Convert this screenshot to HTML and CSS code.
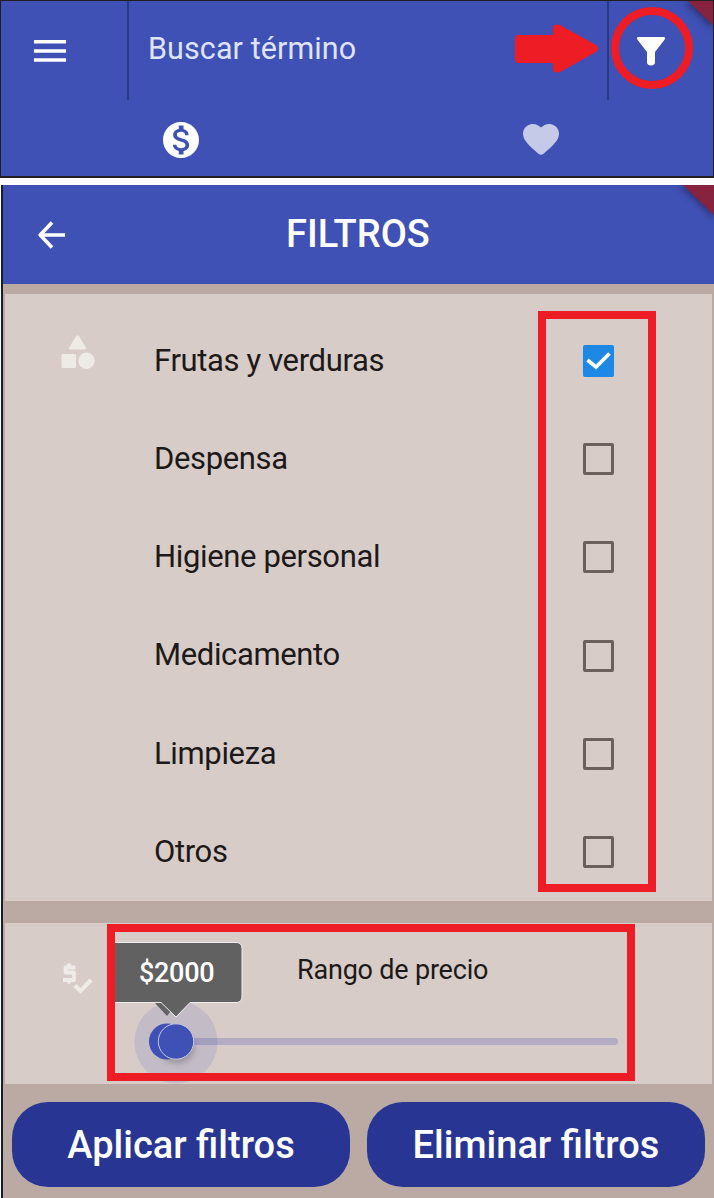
FILE: index.html
```html
<!DOCTYPE html>
<html lang="es">
<head>
<meta charset="utf-8">
<title>Filtros</title>
<link rel="stylesheet" href="styles.css">
</head>
<body>
<section class="search-panel">
  <div class="search-bar">
    <div class="menu"><svg width="32" height="22" viewBox="0 0 32 22"><path d="M0 1.8h32M0 11h32M0 20h32" stroke="#fff" stroke-width="3.6"/></svg></div>
    <div class="search-field"><span class="search-text">Buscar término</span></div>
    <div class="filter"><svg width="28" height="29" viewBox="0 0 28 29"><path fill="#fff" d="M1.5 0h25c1.5 0 2 1.400 1 2.700L18 15v10.500c0 4-8 4-8 0V15L.5 2.700C-.5 1.400 0 0 1.500 0z"/></svg></div>
  </div>
  <div class="tabs">
    <div class="tab"><svg width="36" height="36" viewBox="2 2 20 20"><path fill="#fff" d="M12 2C6.480 2 2 6.480 2 12s4.480 10 10 10 10-4.480 10-10S17.520 2 12 2zm1.410 16.090V20h-2.670v-1.930c-1.710-.36-3.160-1.460-3.270-3.400h1.960c.1 1.050.82 1.870 2.650 1.870 1.960 0 2.400-.98 2.400-1.590 0-.83-.44-1.610-2.670-2.140-2.480-.6-4.180-1.620-4.180-3.670 0-1.720 1.390-2.840 3.110-3.210V4h2.670v1.950c1.860.45 2.790 1.860 2.850 3.390H14.300c-.05-1.110-.64-1.870-2.220-1.870-1.500 0-2.400.68-2.400 1.640 0 .84.65 1.390 2.670 1.910s4.180 1.390 4.180 3.910c-.01 1.830-1.380 2.830-3.120 3.160z"/></svg></div>
    <div class="tab"><svg width="36" height="32" viewBox="2 3 20 18.350" preserveAspectRatio="none"><path fill="#c5cae9" d="M13.350 20.700c-.76.69-1.930.69-2.690-.01l-.11-.1C5.300 15.830 1.870 12.720 2 8.840c.06-1.700.93-3.330 2.340-4.290 2.640-1.800 5.900-.96 7.660 1.100 1.760-2.060 5.020-2.910 7.660-1.100 1.410.96 2.280 2.590 2.340 4.290.14 3.880-3.300 6.990-8.550 11.760l-.1.100z"/></svg></div>
  </div>
  <svg class="ribbon" width="50" height="50" viewBox="0 0 50 50"><path class="ribbon-shade" d="M20 0L50 29V0z"/><path fill="#87233f" d="M25 0L50 24V0z"/></svg>
  <svg class="pointer" width="86" height="50" viewBox="0 0 86 50"><path fill="#ee1c24" d="M4 11H39V4Q39-1 46 1L82 21Q87 24.500 82 28L46 48Q39 50 39 45V39H4Q1 39 1 34V16Q1 11 4 11z"/></svg>
  <div class="ring"></div>
</section>

<section class="filters">
  <header class="app-bar">
    <svg class="back" width="28" height="30" viewBox="0 0 28 30"><path d="M27 15H3M14 2.500L2.200 15 14 27.500" fill="none" stroke="#fff" stroke-width="3.600" stroke-linejoin="round"/></svg>
    <h1 class="title">FILTROS</h1>
    <svg class="ribbon" width="50" height="50" viewBox="0 0 50 50"><path class="ribbon-shade" d="M14 0L50 34V0z"/><path fill="#87233f" d="M19 0L50 30V0z"/></svg>
  </header>
  <div class="card categories">
    <svg class="category-icon" width="34" height="36" viewBox="0 0 34 36" fill="#eeeae6"><path d="M15 1.300q1.500-2 3 0l7 11.500q.5 1.700-1.500 1.700h-14q-2 0-1.500-1.700z"/><rect x="0.500" y="19" width="14.500" height="14" rx="1.500"/><circle cx="25.500" cy="25.700" r="8.200"/></svg>
    <div class="list">
      <div class="row"><span class="label">Frutas y verduras</span><span class="check checked"><svg width="31" height="32" viewBox="0 0 31 32"><path d="M4.500 15l8.500 7L26.500 8.500" fill="none" stroke="#fff" stroke-width="3.600"/></svg></span></div>
      <div class="row"><span class="label">Despensa</span><span class="check"></span></div>
      <div class="row"><span class="label">Higiene personal</span><span class="check"></span></div>
      <div class="row"><span class="label">Medicamento</span><span class="check"></span></div>
      <div class="row"><span class="label">Limpieza</span><span class="check"></span></div>
      <div class="row"><span class="label">Otros</span><span class="check"></span></div>
    </div>
    <div class="mark mark-checks"></div>
  </div>
  <div class="card price">
    <svg class="price-icon" width="32" height="32" viewBox="0 0 32 32" fill="none" stroke="#efebe9"><path d="M13.500 4.500H3.500V9.500H12V17H1M7 0.500V4M7 17V20.500" stroke-width="3.800" stroke-linejoin="round"/><path d="M13 22.500l5.500 5.500L29 17" stroke-width="4"/></svg>
    <div class="price-body">
      <span class="price-title">Rango de precio</span>
      <div class="track"></div>
    </div>
    <svg class="slider" width="150" height="146" viewBox="110 938 150 146">
      <defs><filter id="soft" x="-50%" y="-50%" width="200%" height="200%"><feGaussianBlur stdDeviation="3"/></filter></defs>
      <circle cx="176" cy="1042" r="41.500" fill="#3f51b5" fill-opacity=".13"/>
      <ellipse cx="177" cy="1048" rx="17" ry="15" fill="#333" opacity=".3" filter="url(#soft)"/>
      <path d="M155 1003l12 13 10-13z" fill="#616161"/>
      <circle cx="167" cy="1041.500" r="18" fill="#3f51b5"/>
      <circle cx="176" cy="1041.500" r="17.700" fill="#3f51b5" stroke="#c9c9e5"/>
      <path d="M110 942.500H236q6 0 6 6V996q0 6.500-6 6.500H190L176 1017 161 1002.500H110z" fill="#616161" stroke="#eee"/>
    </svg>
    <span class="value">$2000</span>
    <div class="mark mark-price"></div>
  </div>
  <footer class="actions">
    <button class="action">Aplicar filtros</button>
    <button class="action">Eliminar filtros</button>
  </footer>
</section>
</body>
</html>
```

FILE: styles.css
```css
* { box-sizing: border-box; }
body { margin: 0; width: 714px; height: 1198px; overflow: hidden; background: #fff; font-family: Roboto, sans-serif; }
svg { display: block; flex: none; }
span { white-space: nowrap; }

.search-panel { position: relative; height: 178px; margin-bottom: 7px; background: #3f51b5; border: 1px solid #231f20; border-bottom-width: 2px; overflow: hidden; }
.search-bar { display: flex; height: 99px; }
.menu { width: 128px; padding: 39px 0 0 33px; border-right: 2px solid #2b3884; }
.search-field { width: 480px; padding-left: 19px; border-right: 2px solid #2b3884; line-height: 95px; font-size: 30.5px; color: #dfe3fb; }
.search-text { letter-spacing: .1px; }
.filter { padding: 36px 0 0 28px; }
.tabs { display: flex; height: 76px; }
.tab { flex: none; width: 360px; display: flex; justify-content: center; padding-top: 22px; }
.tab + .tab { padding-top: 23px; }
.ribbon { position: absolute; top: 0; right: 0; }
.ribbon-shade { fill: #252354; opacity: .6; filter: blur(3px); }
.pointer { position: absolute; left: 513px; top: 23px; }
.ring { position: absolute; left: 610px; top: 6px; width: 82px; height: 82px; border: 8px solid #ee1c24; border-radius: 50%; }

.filters { height: 1013px; margin-left: 1px; padding-right: 2px; border-left: 2px solid #172027; background: #bbaaa4; }
.app-bar { position: relative; display: flex; height: 99px; margin-right: -2px; background: #3f51b5; }
.back { margin: 35px 0 0 35px; }
.title { flex: 1; margin: 0 0 0 220px; font-size: 38px; font-weight: 500; line-height: 99px; color: #fff; }
.card { position: relative; display: flex; margin-left: 2px; background: #d7ccc8; }
.categories { height: 607px; margin-top: 10px; padding-top: 18px; }
.category-icon { margin: 23px 0 0 56px; }
.list { width: 460px; margin-left: 59px; }
.row { display: flex; align-items: center; justify-content: space-between; height: 98.2px; font-size: 31px; color: #1d1918; }
.label { padding-bottom: 1.4px; letter-spacing: -.36px; }
.check { width: 31px; height: 32px; border: 3px solid #6c605c; border-radius: 2px; }
.checked { border: 0; background: #1e88e5; }
.mark { position: absolute; border: 8px solid #ee1c24; }
.mark-checks { left: 533px; top: 17px; width: 118px; height: 581px; }
.price { height: 161px; margin-top: 22px; }
.price-icon { margin: 40px 0 0 57px; }
.price-body { width: 469px; margin-left: 55px; }
.price-title { display: block; margin-left: 148px; font-size: 27px; letter-spacing: -.2px; line-height: 94px; color: #1d1918; }
.track { height: 7px; margin-top: 21px; border-radius: 4px; background: #b2abc3; }
.slider { position: absolute; left: 105px; top: 15px; }
.value { position: absolute; left: 134px; top: 33px; font-size: 27px; font-weight: 500; letter-spacing: -.3px; line-height: 34px; color: #fff; }
.mark-price { left: 102px; top: 1px; width: 528px; height: 157px; }
.actions { display: flex; gap: 17px; padding: 18px 7px 0 9px; }
.action { flex: 1; height: 85px; padding: 0; border: 0; border-radius: 36px; background: #283593; color: #fff; font: 500 38px/84px Roboto, sans-serif; }
```
